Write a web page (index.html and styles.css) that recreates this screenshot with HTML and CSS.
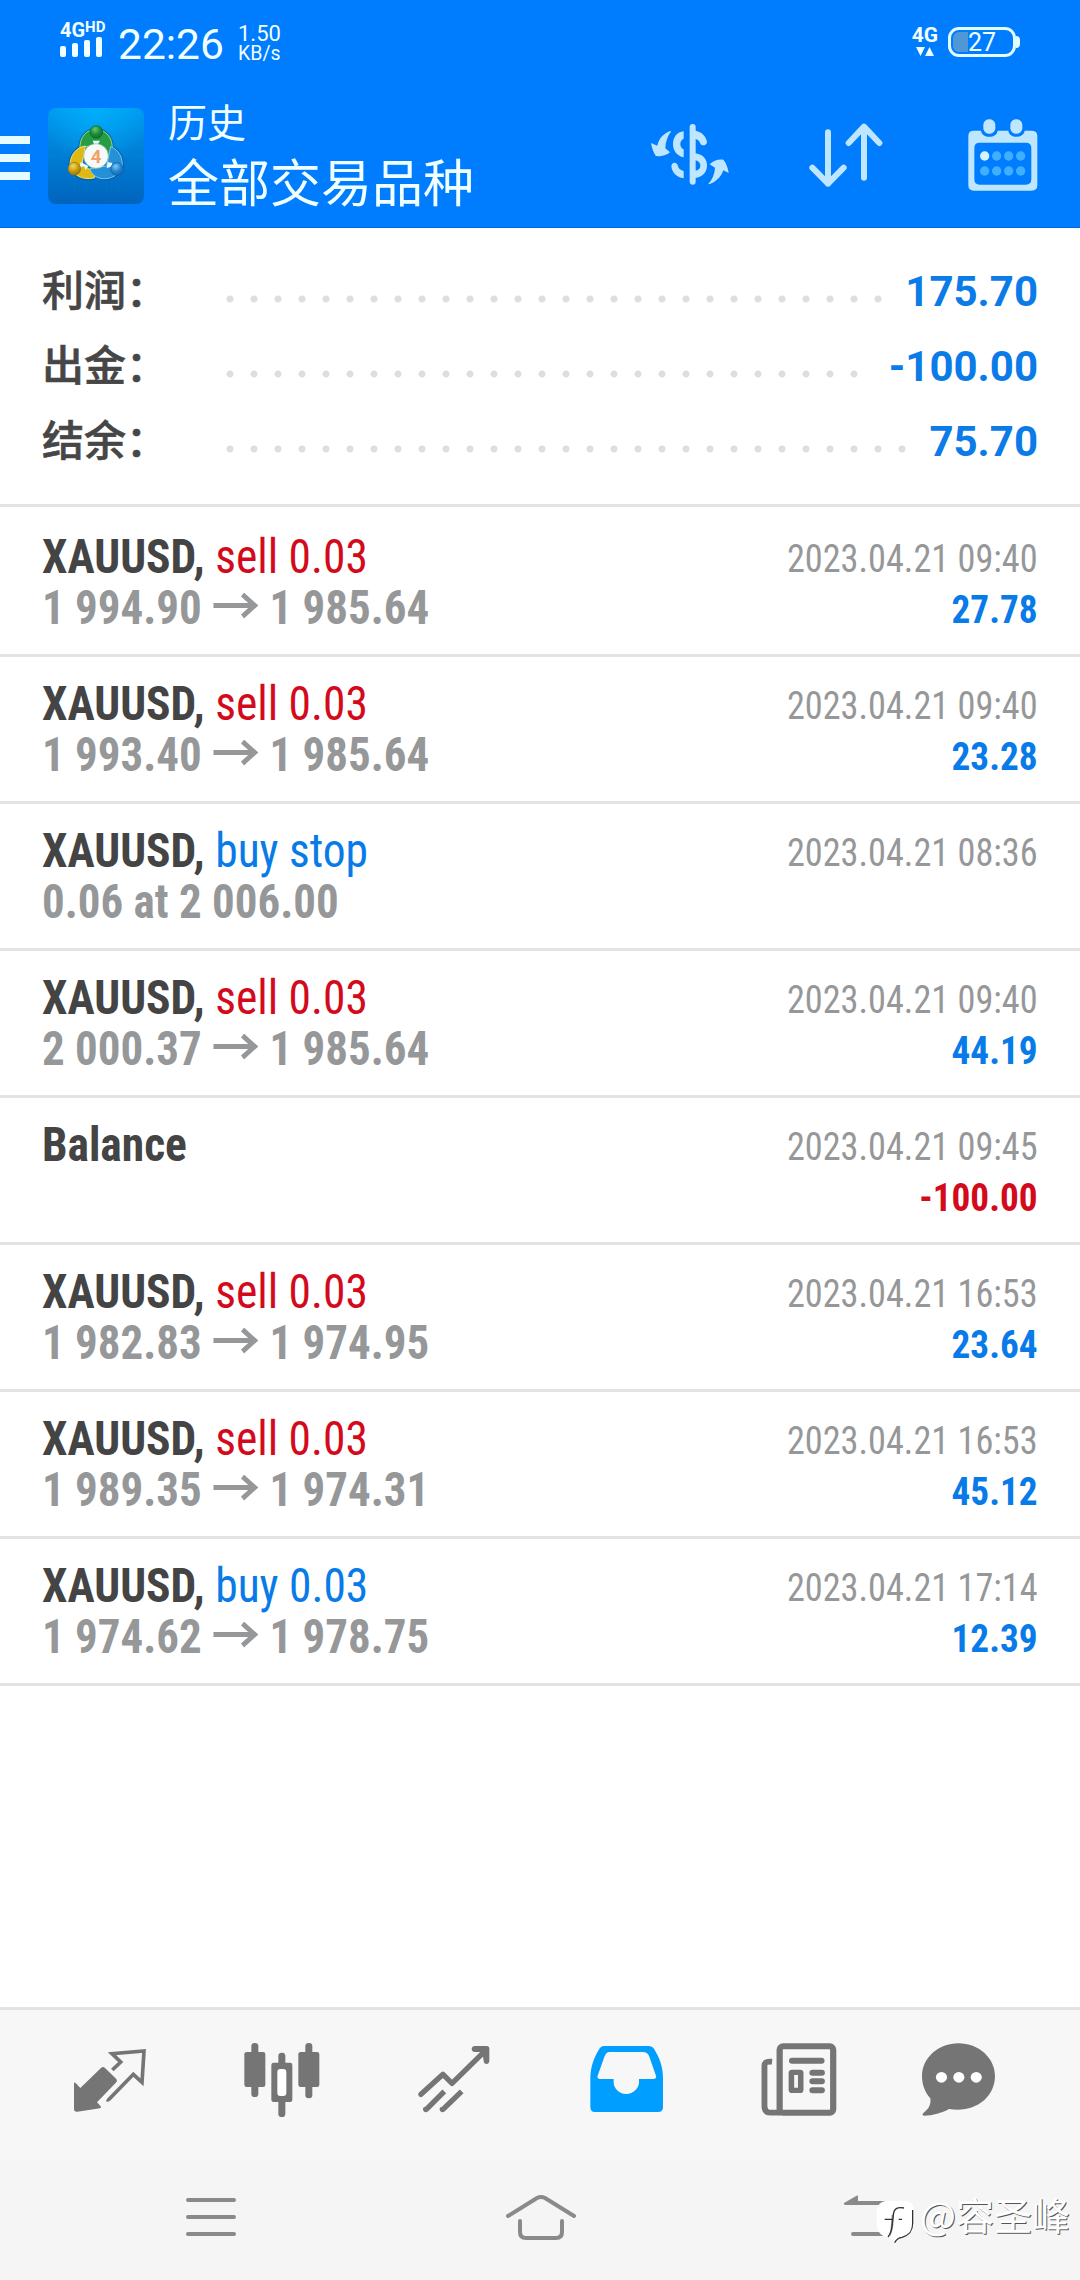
FILE: index.html
```html
<!DOCTYPE html>
<html lang="zh-CN">
<head>
<meta charset="utf-8">
<title>历史</title>
<link rel="stylesheet" href="styles.css">
</head>
<body>
<div class="screen">
  <header class="header">
    <div class="status">
      <div class="signal">
        <div class="net"><b>4G</b><b class="hd">HD</b></div>
        <svg width="42" height="20" viewBox="0 0 42 20" fill="#f0ffff"><rect y="9" width="6" height="11" rx="2"/><rect x="12" y="6" width="6" height="14" rx="2"/><rect x="24" y="3" width="6" height="17" rx="2"/><rect x="36" width="6" height="20" rx="2"/></svg>
      </div>
      <span class="time">22:26</span>
      <div class="speed"><span>1.50</span><span class="unit">KB/s</span></div>
      <div class="data">
        <b>4G</b>
        <svg width="18" height="9" viewBox="0 0 18 9" fill="#f0ffff"><path d="M0 0h9L4.500 9zM9 9h9L13.500 0z"/></svg>
      </div>
      <div class="battery"><i class="charge"></i><span>27</span></div>
    </div>
    <div class="toolbar">
      <svg class="menu" width="30" height="44" viewBox="0 0 30 44" fill="#e6fbff"><path d="M0 0h30v8H0zM0 18h30v8H0zM0 36h30v8H0z"/></svg>
      <svg class="logo" width="96" height="96" viewBox="24 24 288 288">
        <defs>
          <linearGradient id="bg" x1="0" y1="0" x2="0" y2="1"><stop offset="0" stop-color="#0098ee"/><stop offset=".4" stop-color="#0082d8"/><stop offset="1" stop-color="#0064bd"/></linearGradient>
          <radialGradient id="shine" cx=".5" cy="0" r=".6"><stop offset="0" stop-color="#00b4ff" stop-opacity=".8"/><stop offset="1" stop-color="#00b4ff" stop-opacity="0"/></radialGradient>
          <radialGradient id="gr" cx=".4" cy=".3" r=".8"><stop offset="0" stop-color="#6cc46c"/><stop offset=".5" stop-color="#1d8c38"/><stop offset="1" stop-color="#066a30"/></radialGradient>
          <radialGradient id="ye" cx=".4" cy=".3" r=".8"><stop offset="0" stop-color="#f4da60"/><stop offset=".5" stop-color="#c99d10"/><stop offset="1" stop-color="#846a0a"/></radialGradient>
          <radialGradient id="bl" cx=".4" cy=".3" r=".8"><stop offset="0" stop-color="#7fcaf4"/><stop offset=".5" stop-color="#2385d0"/><stop offset="1" stop-color="#0a5fae"/></radialGradient>
        </defs>
        <rect x="24" y="24" width="288" height="288" rx="24" fill="url(#bg)"/>
        <rect x="24" y="24" width="288" height="288" rx="24" fill="url(#shine)"/>
        <path d="M72 24v288M104 24v288M136 24v288M168 24v288M200 24v288M232 24v288M264 24v288M24 72h288M24 104h288M24 136h288M24 168h288M24 200h288M24 232h288M24 264h288" stroke="#36b4ff" stroke-width="1" opacity=".16"/>
        <g fill="none" stroke="#0a4a78" stroke-width="10" opacity=".45"><path d="M120 146c-2-34 20-58 48-58s52 26 48 60"/><path d="M136 138c-28 4-46 28-46 58 6 28 36 46 72 38"/><path d="M212 140c24 10 38 32 34 62-12 24-32 36-58 34"/></g>
        <path d="M120 146c-2-34 20-58 48-58s52 26 48 60c-1 12-6 22-12 28l-36-40-32 4z" fill="#269c45" stroke="#a5d870" stroke-width="3"/>
        <path d="M136 138c-28 4-46 28-46 58 6 28 36 46 72 38 4-4 4-10 0-16l-36-26z" fill="#e0b814" stroke="#f4e268" stroke-width="3"/>
        <path d="M212 140c24 10 38 32 34 62-12 24-32 36-58 34-20-2-34-14-38-30l50-8z" fill="#2490d8" stroke="#7cc6f4" stroke-width="3"/>
        <path d="M158 122h22l-6 10h-12zM122 186l-4 18 14-6 5 12 8-12zM200 204l3-18 14 3-3 11z" fill="#e8fbff"/>
        <circle cx="169" cy="96" r="19" fill="url(#gr)" stroke="#07642d" stroke-width="2"/>
        <circle cx="103" cy="206" r="19" fill="url(#ye)" stroke="#8a741a" stroke-width="2"/>
        <circle cx="231" cy="207" r="19" fill="url(#bl)" stroke="#0b5b9f" stroke-width="2"/>
        <circle cx="168" cy="168" r="37" fill="#f5fbfa" stroke="#86b789" stroke-width="2"/>
        <text x="168" y="188" text-anchor="middle" class="four">4</text>
      </svg>
      <div class="titles"><span class="small">历史</span><span class="big">全部交易品种</span></div>
      <div class="actions">
        <svg width="80" height="62" viewBox="211 371 240 186" fill="#bfe6ff">
          <path d="M275 392c-20 3-38 22-42 44l-19-8c2 12 6 26 14 38 16 4 30 0 43-10l-14-12c1-20 6-36 18-52z"/>
          <path d="M385 552c20-3 38-20 46-42l16 8c-2-14-6-28-16-40-16-2-30 3-41 14l16 10c-1 20-8 36-21 50z"/>
          <rect x="330" y="371" width="18" height="182" rx="9"/>
          <path d="M312 393c-20 2-32 18-32 38s12 36 32 40v-24c-7-3-10-9-10-16s3-13 10-16zM312 534c-20-3-35-16-37-36 1-14 18-14 20 0 2 8 8 12 17 14zM346 391c18 2 34 16 36 34-1 12-18 14-21 2-2-6-7-10-15-12zM346 459c22 2 36 16 36 36s-12 36-36 38v-22c10-1 16-6 16-15s-6-15-16-16z"/>
        </svg>
        <svg width="74" height="64" viewBox="687 370 222 192" fill="none" stroke="#bfe6ff" stroke-width="18" stroke-linecap="round" stroke-linejoin="round"><path d="M744 398v154M697 504l47 48 47-48M852 534V381M806 430l46-49 46 49"/></svg>
        <svg width="70" height="72" viewBox="1163 355 210 216">
          <path fill="#bfe6ff" fill-rule="evenodd" d="M1180 390h22c2 12 12 18 25 18s23-6 25-18h32c2 12 12 18 24 18s23-6 25-18h20q18 0 18 16v148q0 16-18 16h-172q-17 0-17-16V406q0-16 16-16zM1198 426q-16 0-16 16v94q0 16 16 16h138q17 0 17-16v-94q0-16-17-16z"/>
          <g fill="#bfe6ff"><rect x="1209" y="356" width="36" height="43" rx="16"/><rect x="1290" y="356" width="36" height="43" rx="16"/></g>
          <circle cx="1213" cy="466" r="14" fill="#d5f4ff"/>
          <g fill="#3eb0ff"><circle cx="1249" cy="466" r="14"/><circle cx="1285" cy="466" r="14"/><circle cx="1321" cy="466" r="14"/><circle cx="1213" cy="511" r="14"/><circle cx="1249" cy="511" r="14"/><circle cx="1285" cy="511" r="14"/><circle cx="1321" cy="511" r="14"/></g>
        </svg>
      </div>
    </div>
  </header>

  <section class="summary">
    <div class="sum"><span class="label">利润：</span><i class="dots"></i><b>175.70</b></div>
    <div class="sum"><span class="label">出金：</span><i class="dots"></i><b>-100.00</b></div>
    <div class="sum"><span class="label">结余：</span><i class="dots"></i><b>75.70</b></div>
  </section>

  <main class="list">
    <div class="row"><div class="left"><p class="deal"><b>XAUUSD, </b><span class="sell">sell 0.03</span></p><p class="price">1 994.90 <svg class="arrow" viewBox="0 0 48 26"><path d="M0 12.500h44M31 1.500l13 11-13 11"/></svg> 1 985.64</p></div><div class="right"><p class="date">2023.04.21 09:40</p><p class="gain">27.78</p></div></div>
    <div class="row"><div class="left"><p class="deal"><b>XAUUSD, </b><span class="sell">sell 0.03</span></p><p class="price">1 993.40 <svg class="arrow" viewBox="0 0 48 26"><path d="M0 12.500h44M31 1.500l13 11-13 11"/></svg> 1 985.64</p></div><div class="right"><p class="date">2023.04.21 09:40</p><p class="gain">23.28</p></div></div>
    <div class="row"><div class="left"><p class="deal"><b>XAUUSD, </b><span class="buy">buy stop</span></p><p class="price">0.06 at 2 006.00</p></div><div class="right"><p class="date">2023.04.21 08:36</p></div></div>
    <div class="row"><div class="left"><p class="deal"><b>XAUUSD, </b><span class="sell">sell 0.03</span></p><p class="price">2 000.37 <svg class="arrow" viewBox="0 0 48 26"><path d="M0 12.500h44M31 1.500l13 11-13 11"/></svg> 1 985.64</p></div><div class="right"><p class="date">2023.04.21 09:40</p><p class="gain">44.19</p></div></div>
    <div class="row"><div class="left"><p class="deal"><b>Balance</b></p></div><div class="right"><p class="date">2023.04.21 09:45</p><p class="loss">-100.00</p></div></div>
    <div class="row"><div class="left"><p class="deal"><b>XAUUSD, </b><span class="sell">sell 0.03</span></p><p class="price">1 982.83 <svg class="arrow" viewBox="0 0 48 26"><path d="M0 12.500h44M31 1.500l13 11-13 11"/></svg> 1 974.95</p></div><div class="right"><p class="date">2023.04.21 16:53</p><p class="gain">23.64</p></div></div>
    <div class="row"><div class="left"><p class="deal"><b>XAUUSD, </b><span class="sell">sell 0.03</span></p><p class="price">1 989.35 <svg class="arrow" viewBox="0 0 48 26"><path d="M0 12.500h44M31 1.500l13 11-13 11"/></svg> 1 974.31</p></div><div class="right"><p class="date">2023.04.21 16:53</p><p class="gain">45.12</p></div></div>
    <div class="row"><div class="left"><p class="deal"><b>XAUUSD, </b><span class="buy">buy 0.03</span></p><p class="price">1 974.62 <svg class="arrow" viewBox="0 0 48 26"><path d="M0 12.500h44M31 1.500l13 11-13 11"/></svg> 1 978.75</p></div><div class="right"><p class="date">2023.04.21 17:14</p><p class="gain">12.39</p></div></div>
  </main>

  <nav class="tabs">
    <svg width="72" height="75" viewBox="72 39 216 225">
      <path fill="#757575" d="M72 160q0-4 4-2l15 16 62-60q6-6 12 0l34 33q4 5 0 10l-58 60 11 12q3 5-2 6l-68 10q-10 1-10-8z"/>
      <path fill="none" stroke="#757575" stroke-width="11" stroke-linejoin="miter" d="M187 120l25-24-26-25 96-8-6 94-26-24-72 74q-4 4-8 2"/>
    </svg>
    <svg width="76" height="75" viewBox="581 39 228 225" fill="#757575">
      <rect x="582" y="66" width="63" height="105" rx="7"/><rect x="603" y="39" width="21" height="162" rx="10"/>
      <rect x="744" y="66" width="63" height="105" rx="7"/><rect x="765" y="39" width="21" height="166" rx="10"/>
      <rect x="684" y="68" width="21" height="193" rx="10"/><rect x="663" y="98" width="63" height="118" rx="7"/><rect x="681" y="117" width="27" height="81" rx="9" fill="#fff"/>
    </svg>
    <svg width="72" height="75" viewBox="1103 39 216 225" fill="none" stroke="#757575" stroke-width="16" stroke-linejoin="round">
      <path stroke-linecap="round" d="M1112 193l66-60 27 27 100-98"/><path d="M1128 238l54-54M1178 238l56-54"/><path stroke="none" fill="#757575" d="M1273 48h36q8 0 8 8v36c0 13-17 13-17 0l-4-26h-23c-12 0-12-18 0-18zM1134 243a9 9 0 1 1-12-13zM1184 243a9 9 0 1 1-12-13z"/>
    </svg>
    <svg class="mail" width="73" height="75" viewBox="146 159 210 225" preserveAspectRatio="none">
      <path fill="#009fff" d="M186 168h128q11 0 17 10c14 25 25 50 25 88v86q0 14-14 14H160q-13 0-13-14v-84c0-36 9-62 24-88q6-12 15-12z"/>
      <path fill="#f7f7f7" d="M202 186h96q13 0 18 12l20 60q2 9-9 9h-40v10c0 18-16 35-37 35s-36-17-36-35v-10h-36q-13 0-10-10l20-58q5-13 14-13z"/>
    </svg>
    <svg width="76" height="75" viewBox="645 157 220 225" preserveAspectRatio="none" fill="none" stroke="#757575">
      <rect x="699" y="167" width="155" height="199" rx="10" fill="#f7f7f7" stroke-width="18"/>
      <path d="M677 213q-22-2-22 12v120q0 21 18 21h30" stroke-width="17"/>
      <path d="M735 210h85M794 246h27M794 272h27M794 299h27" stroke-width="18" stroke-linecap="round"/>
      <rect x="733" y="245" width="27" height="54" rx="2" stroke-width="16"/>
    </svg>
    <svg class="last" width="73" height="75" viewBox="1108 157 210 225" preserveAspectRatio="none">
      <path fill="#757575" d="M1213 158c58 0 105 44 105 98 0 66-60 112-132 99-22 12-46 20-72 20-6-1-5-6-1-9 16-12 21-26 19-43-16-18-24-42-24-67 0-54 47-98 105-98z"/>
      <g fill="#fff"><circle cx="1164" cy="260" r="16"/><circle cx="1214" cy="260" r="16"/><circle cx="1264" cy="260" r="16"/></g>
    </svg>
  </nav>

  <footer class="sysnav">
    <svg width="50" height="42" viewBox="0 0 50 42" stroke="#8a8a8a" stroke-width="4" stroke-linecap="round"><path d="M2 4h46M2 21h46M2 38h46"/></svg>
    <svg width="70" height="46" viewBox="0 0 70 46" fill="none" stroke="#8a8a8a" stroke-width="4" stroke-linecap="round" stroke-linejoin="round"><path d="M2 22L31 4q4-2 8 0l29 18M14 27v11q0 6 6 6h30q6 0 6-6V27"/></svg>
    <svg width="56" height="44" viewBox="0 0 56 44" fill="#8a8a8a"><path d="M1 8L14 .5q1-.5 1 1V6h37q4 0 4 4v27q0 4-4 4H10q-2 0-2-2t2-2h42V10H2q-2-1-1-2z"/></svg>
  </footer>

  <div class="watermark">
    <svg width="40" height="46" viewBox="138 60 120 138">
      <path fill="#fff" d="M176 62h44c24 0 33 12 33 36v26c0 24-8 44-36 48l-20 14-24-14c-24-4-33-22-33-46V98c0-24 12-36 36-36z"/>
      <path fill="#9a9a9a" d="M185 104h5v30q-2 22-10 36z"/>
      <path fill="none" stroke="#333" stroke-width="4" d="M222 84c-20-4-31 2-32 22l-4 34q-3 20-12 31M164 118h23M206 118h10M248 90v40c0 26-12 36-32 42-8 1-18 8-22 16"/>
    </svg>
    <span>@容圣峰</span>
  </div>
</div>
</body>
</html>
```
FILE: styles.css
```css
* { box-sizing: border-box; }
body { margin: 0; background: #fff; font-family: Roboto, "Noto Sans CJK SC", sans-serif; }
p { margin: 0; }
svg { display: block; flex: none; }

.screen { position: relative; width: 1080px; height: 2280px; display: flex; flex-direction: column; overflow: hidden; }

.header { height: 228px; background: #007cff; border-bottom: 1px solid #0068d8; color: #f0ffff; }
.status { height: 84px; display: flex; align-items: flex-start; padding: 0 59px 0 60px; }
.signal { width: 46px; padding-top: 20px; }
.net { height: 17px; display: flex; align-items: flex-start; font-size: 20px; line-height: 20px; }
.net .hd { font-size: 15px; line-height: 14px; }
.time { margin-left: 12px; padding-top: 20px; font-size: 42.500px; line-height: 50px; width: 107px; }
.speed { margin-left: 13px; padding-top: 22px; display: flex; flex-direction: column; font-size: 22px; line-height: 23px; }
.speed .unit { font-size: 19.500px; line-height: 18px; }
.data { margin-left: auto; width: 26px; padding-top: 24px; display: flex; flex-direction: column; align-items: center; font-size: 21px; line-height: 22px; }
.data svg { margin-top: 1px; }
.battery { position: relative; margin: 27px 5px 0 10px; width: 68px; height: 30px; border: 3px solid #e2fdff; border-radius: 11px; font-size: 25px; line-height: 25px; text-align: center; }
.battery::after { content: ""; position: absolute; right: -7px; top: 6px; width: 4px; height: 12px; border-radius: 0 4px 4px 0; background: #e2fdff; }
.battery span { position: relative; }
.charge { position: absolute; left: 2px; top: 2px; width: 15px; height: 20px; border-radius: 6px 0 0 6px; background: #5097d8; }

.toolbar { height: 143px; display: flex; padding-right: 42px; }
.menu { margin-top: 52px; }
.logo { margin: 24px 0 0 18px; }
.four { font: 700 56px Roboto, sans-serif; fill: #f4a069; }
.titles { margin-left: 24px; padding-top: 9px; display: flex; flex-direction: column; font-family: "Noto Sans CJK SC", sans-serif; font-weight: 400; }
.small { font-size: 39px; line-height: 54px; }
.big { font-size: 51px; line-height: 66px; }
.actions { margin-left: auto; display: flex; padding-top: 35px; }
.actions svg:nth-child(1) { margin-top: 5px; }
.actions svg:nth-child(2) { margin: 4px 85px 0 79px; }

.summary { padding: 25px 42px 0; height: 276px; }
.sum { height: 75px; display: flex; align-items: center; font-size: 42px; }
.label { width: 184px; flex: none; margin-top: -7px; color: #464646; font: 500 42px/75px "Noto Sans CJK SC", sans-serif; -webkit-text-stroke: .6px #464646; }
.dots { flex: 1; height: 8px; margin: 16px 20px 0 0; background: radial-gradient(circle at 4px 4px, #dedede 3px, transparent 4px) 0 0 / 24px 8px repeat-x; }
.sum b { margin-top: 2px; color: #0b7be8; }

.list { flex: 1; border-top: 3px solid #e3e3e3; padding-top: 3px; font-family: Roboto, sans-serif; font-stretch: 75%; }
.row { height: 147px; border-bottom: 3px solid #e3e3e3; padding: 21px 42px 0; display: flex; justify-content: space-between; white-space: nowrap; }
.left { font-size: 48px; line-height: 51px; color: #444; }
.left p { transform-origin: left; }
.left b { white-space: pre; }
.deal { transform: scaleX(.947); }
.price { font-weight: 700; color: #969799; transform: scaleX(.937); }
.arrow { display: inline-block; width: 50px; height: 26px; vertical-align: 5px; fill: none; stroke: #969799; stroke-width: 5; }
.right { padding-top: 3px; font-size: 39px; line-height: 51px; text-align: right; }
.right p { transform-origin: right; }
.date { color: #969799; transform: scaleX(.93); }
.sell { color: #d30a1b; }
.buy { color: #087be8; }
.gain, .loss { font-weight: 700; transform: scaleX(.955); }
.gain { color: #087be8; }
.loss { color: #d30a1b; }

.tabs { height: 154px; background: #f7f7f7; border-top: 3px solid #e3e3e3; display: flex; gap: 98px; padding: 33px 0 0 74px; }
.tabs .mail { margin-left: 2px; }
.tabs .last { margin-left: -13px; }
.sysnav { height: 119px; background: #f5f5f5; display: flex; padding: 34px 0 0 186px; }
.sysnav svg:nth-child(1) { margin-top: 1px; }
.sysnav svg:nth-child(2) { margin: -1px 267px 0 270px; }

.watermark { position: absolute; left: 876px; top: 2200px; display: flex; align-items: flex-start; gap: 4px; color: #fff; font: 38px/48px "Noto Sans CJK SC", sans-serif; text-shadow: 1px 1px 0 #555; }
.watermark span { margin-top: -10px; }
```
